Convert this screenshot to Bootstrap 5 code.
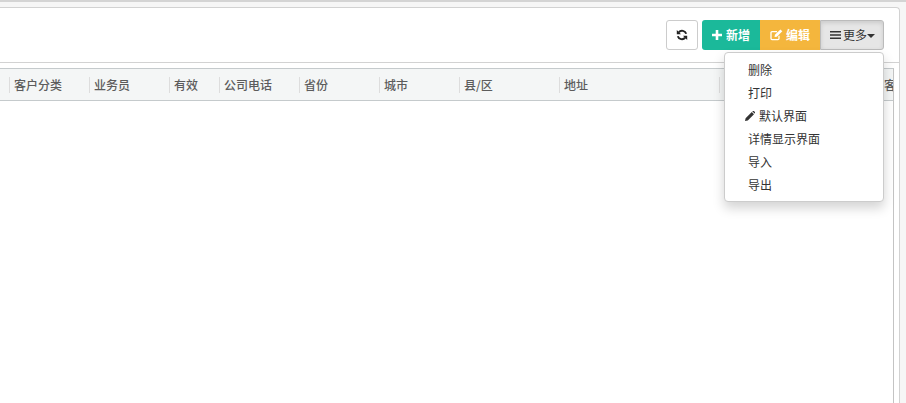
<!DOCTYPE html>
<html lang="zh">
<head>
<meta charset="utf-8">
<title>客户</title>
<link href="https://cdn.jsdelivr.net/npm/bootstrap@5.3.0/dist/css/bootstrap.min.css" rel="stylesheet">
<style>
html,body{height:403px;overflow:hidden}
body{background:#f6f6f6;font-family:"Noto Sans CJK SC","Liberation Sans",sans-serif;font-size:12px;color:#333;border-top:2px solid #d4d4d4;padding-top:5px}
.sheet{width:900px;height:396px;background:#fff;border:1px solid #d2d2d2;border-left:0;border-bottom:0;border-top-right-radius:4px}
.tools{height:55px;border-bottom:1px solid #d2d2d2;padding:12px 15px 0 0}
.tools .btn{height:30px;font-size:12px;padding:0;border-radius:0;display:inline-flex;align-items:center;justify-content:center}
.refresh{width:32px;background:#fff;border:1px solid #ccc;border-radius:3px!important;margin-right:4px}
.add{width:58px;gap:4px;background:#1bb99a;border:0;color:#fff;font-weight:700;border-radius:3px 0 0 3px!important}
.edit{width:60px;gap:3px;background:#f4b63d;border:0;color:#fff;font-weight:700}
.more{width:64px;gap:2px;background:#e6e6e6;border:1px solid #bbb;color:#333;border-radius:0 3px 3px 0!important;box-shadow:inset 0 2px 4px rgba(0,0,0,.12)}
.more svg{margin-left:1px}
.caret-d{width:0;height:0;border-left:4px solid transparent;border-right:4px solid transparent;border-top:4px solid #333;margin-top:2px;margin-left:-2px}
.tbl{width:894px;height:335px;margin-top:5px;border-top:1px solid #c5cacc;border-right:1px solid #c4c4c4}
.thead{height:32px;background:#f4f6f6;border-bottom:1px solid #c5cacc;overflow:hidden;flex-wrap:nowrap}
.th{flex:none;height:16px;border-left:1px solid #ddd;padding-left:4px;line-height:16px;color:#5c5c5c;font-weight:500;white-space:nowrap;overflow:hidden}
.w0{width:9px;border-left:0;padding:0}.w50{width:50px}.w80{width:80px}.w100{width:100px}.w160{width:160px}.w14{width:14px}
.menu-pop{position:absolute;left:724px;top:52px;width:160px;height:150px;background:#fff;border:1px solid #ccc;border-radius:4px;box-shadow:0 6px 12px rgba(0,0,0,.175);padding:6px 0 4px;z-index:5}
.menu-row{height:23px;line-height:22px;padding-left:23px;color:#333;position:relative}
.pencil{position:absolute;left:20px;top:6px}
.menu-row.has-ico{padding-left:34px}
</style>
</head>
<body>
<div class="sheet">
  <div class="tools d-flex justify-content-end align-items-start">
    <button class="btn refresh" type="button" aria-label="刷新">
      <svg width="12" height="12" viewBox="0 0 12 12"><path d="M10.2 4.8A4.4 4.4 0 0 0 2.8 3.2M1.8 7.2A4.4 4.4 0 0 0 9.2 8.8" fill="none" stroke="#222" stroke-width="2"/><path d="M.8 1v4.2H5zM11.2 11V6.8H7z" fill="#222"/></svg>
    </button>
    <button class="btn add" type="button">
      <svg width="10" height="10" viewBox="0 0 10 10"><path d="M3.7 0h2.6v3.7H10v2.6H6.3V10H3.7V6.3H0V3.7h3.7z" fill="#fff"/></svg>新增
    </button>
    <button class="btn edit" type="button">
      <svg width="13" height="12" viewBox="0 0 13 12"><path d="M9 6.8V9.6a1 1 0 0 1-1 1H2a1 1 0 0 1-1-1V3.6a1 1 0 0 1 1-1h5" fill="none" stroke="#fff" stroke-width="1.3"/><path d="M4.5 8l.4-2.2L10.4.4l1.9 1.9-5.5 5.4z" fill="#fff"/></svg>编辑
    </button>
    <button class="btn more" type="button">
      <svg width="11" height="10" viewBox="0 0 11 10"><path d="M0 1h11v1.6H0zM0 4.2h11v1.6H0zM0 7.4h11V9H0z" fill="#333"/></svg>更多<span class="caret-d"></span>
    </button>
  </div>
  <div class="tbl">
    <div class="thead d-flex align-items-center">
      <div class="th w0"></div>
      <div class="th w80">客户分类</div>
      <div class="th w80">业务员</div>
      <div class="th w50">有效</div>
      <div class="th w80">公司电话</div>
      <div class="th w80">省份</div>
      <div class="th w80">城市</div>
      <div class="th w100">县/区</div>
      <div class="th w160">地址</div>
      <div class="th w160"></div>
      <div class="th w14">客</div>
    </div>
  </div>
</div>
<div class="menu-pop">
  <div class="menu-row">删除</div>
  <div class="menu-row">打印</div>
  <div class="menu-row has-ico">
    <svg class="pencil" width="10" height="10" viewBox="0 0 10 10"><path d="M0 10l.6-2.8L6.8 1l2.2 2.2-6.2 6.2zM7.4.4l.3-.3a.9.9 0 0 1 1.2 0l1 1a.9.9 0 0 1 0 1.2l-.3.3z" fill="#333"/></svg>默认界面
  </div>
  <div class="menu-row">详情显示界面</div>
  <div class="menu-row">导入</div>
  <div class="menu-row">导出</div>
</div>
<script src="https://cdn.jsdelivr.net/npm/bootstrap@5.3.0/dist/js/bootstrap.bundle.min.js"></script>
</body>
</html>
